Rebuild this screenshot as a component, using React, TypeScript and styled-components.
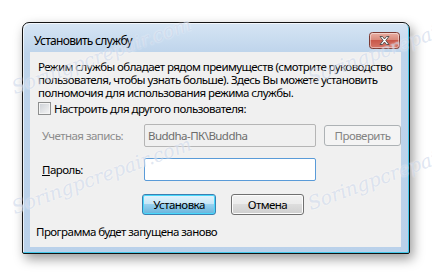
import React from "react";
import styled, { createGlobalStyle } from "styled-components";

const GlobalStyle = createGlobalStyle`
  html, body {
    margin: 0;
    padding: 0;
    background: #ffffff;
  }
  body {
    width: 432px;
    height: 277px;
    overflow: hidden;
    font-family: "Segoe UI", "Noto Sans", "Liberation Sans", sans-serif;
    font-size: 11.5px;
    letter-spacing: -0.55px;
    color: #000;
  }
`;

function App() {
  return (
    <Page>
      <GlobalStyle />
      <DialogWindow>
        <TitleBar>
          <TitleText>Установить службу</TitleText>
          <CloseButton>
            <CloseIcon />
          </CloseButton>
        </TitleBar>

        <ClientArea>
          <Intro>
            Режим службы обладает рядом преимуществ (смотрите руководство
            <br />
            пользователя, чтобы узнать больше). Здесь Вы можете установить
            <br />
            полномочия для использования режима службы.
          </Intro>

          <CheckRow>
            <CheckBox />
            <span>Настроить для другого пользователя:</span>
          </CheckRow>

          <FormGrid>
            <FieldLabel disabled>Учетная запись:</FieldLabel>
            <TextBox disabled>Buddha-ПК\Buddha</TextBox>
            <PushButton disabled>Проверить</PushButton>

            <FieldLabel>
              <u>П</u>ароль:
            </FieldLabel>
            <TextBox focused />
          </FormGrid>

          <ButtonRow>
            <PushButton primary w={74}>
              Установка
            </PushButton>
            <PushButton w={73}>Отмена</PushButton>
          </ButtonRow>

          <Footer>Программа будет запущена заново</Footer>
        </ClientArea>
      </DialogWindow>

      <Watermark style={{ left: 16, top: 76 }}>Soringpcrepair.com</Watermark>
      <Watermark style={{ left: 312, top: 66 }}>Soringpcrepair.com</Watermark>
      <Watermark style={{ left: 16, top: 196 }}>Soringpcrepair.com</Watermark>
      <Watermark style={{ left: 312, top: 192 }}>Soringpcrepair.com</Watermark>
    </Page>
  );
}

function CloseIcon() {
  return (
    <svg width="31" height="17" viewBox="0 0 31 17">
      <defs>
        <linearGradient id="closeBg" x1="0" y1="0" x2="0" y2="1">
          <stop offset="0" stopColor="#eab1a6" />
          <stop offset="0.45" stopColor="#d98b7d" />
          <stop offset="0.5" stopColor="#c9584a" />
          <stop offset="1" stopColor="#d5786a" />
        </linearGradient>
      </defs>
      <rect x="0.5" y="0.5" width="30" height="16" rx="3" fill="url(#closeBg)" stroke="#7b3a33" />
      <rect x="1.5" y="1.5" width="28" height="14" rx="2" fill="none" stroke="rgba(255,255,255,0.45)" />
      <path
        d="M11 4.5 L13.5 4.5 L15.5 7 L17.5 4.5 L20 4.5 L16.8 8.5 L20 12.5 L17.5 12.5 L15.5 10 L13.5 12.5 L11 12.5 L14.2 8.5 Z"
        fill="#ffffff"
        stroke="#4a4a4a"
        strokeWidth="0.9"
        strokeLinejoin="round"
      />
    </svg>
  );
}

const Page = styled.div`
  position: relative;
  width: 432px;
  height: 277px;
  box-sizing: border-box;
  padding: 22px 0 0 22px;
  overflow: hidden;
`;

const DialogWindow = styled.div`
  width: 388px;
  height: 232px;
  box-sizing: border-box;
  display: flex;
  flex-direction: column;
  padding: 0 8px 6px 7px;
  border: 1px solid #141414;
  border-radius: 7px 7px 2px 2px;
  background: linear-gradient(#d6e5f4, #bed4eb 30px, #bad1ea);
  box-shadow: inset -1px -1px 0 #43c8ea, inset 1px 1px 0 rgba(255, 255, 255, 0.7),
    3px 5px 12px rgba(0, 0, 0, 0.4);
`;

const TitleBar = styled.div`
  height: 29px;
  display: flex;
  align-items: flex-start;
  justify-content: space-between;
`;

const TitleText = styled.span`
  margin: 10px 0 0 4px;
  font-size: 12px;
  letter-spacing: -0.7px;
  line-height: 16px;
`;

const CloseButton = styled.div`
  margin: 9px 1px 0 0;
  width: 31px;
  height: 17px;
  display: flex;
`;

const ClientArea = styled.div`
  flex: 1;
  min-width: 0;
  background: #f0f0f0;
  padding: 8px 0 0 0;
  display: flex;
  flex-direction: column;
`;

const Intro = styled.div`
  margin-left: 8px;
  line-height: 13px;
  white-space: nowrap;
`;

const CheckRow = styled.div`
  margin: 3px 0 0 8px;
  height: 13px;
  display: flex;
  align-items: center;
  gap: 3px;
  line-height: 13px;
`;

const CheckBox = styled.span`
  width: 11px;
  height: 11px;
  border: 1px solid #8e8f8f;
  background: linear-gradient(135deg, #cbcfd5, #f6f6f6);
  box-shadow: inset 0 0 0 1px #f4f4f4;
`;

const FormGrid = styled.div`
  margin: 9px 0 0 12px;
  display: grid;
  grid-template-columns: 94px 172px 77px;
  column-gap: 8px;
  row-gap: 11px;
  align-items: center;
`;

const FieldLabel = styled.span<{ disabled?: boolean }>`
  color: ${(p) => (p.disabled ? "#8d8d8d" : "#000")};
  line-height: 14px;
`;

const TextBox = styled.div<{ disabled?: boolean; focused?: boolean }>`
  height: 23px;
  box-sizing: border-box;
  padding: 0 3px;
  display: flex;
  align-items: center;
  border: 1px solid ${(p) => (p.focused ? "#5a9bd8" : "#b5b5b5")};
  border-radius: 2px;
  background: ${(p) => (p.disabled ? "#f0f0f0" : "#ffffff")};
  color: #6d6d6d;
`;

const PushButton = styled.div<{ primary?: boolean; disabled?: boolean; w?: number }>`
  width: ${(p) => (p.w ? `${p.w}px` : "auto")};
  height: 21px;
  box-sizing: border-box;
  display: flex;
  align-items: center;
  justify-content: center;
  border-radius: 3px;
  border: 1px solid
    ${(p) => (p.primary ? "#3c7fb1" : p.disabled ? "#adb2b5" : "#707070")};
  color: ${(p) => (p.disabled ? "#838383" : "#000")};
  background: ${(p) =>
    p.primary
      ? "linear-gradient(#e5f4fc, #c4e5f6 50%, #98d1ef 50%, #68b3db)"
      : p.disabled
      ? "#f4f4f4"
      : "linear-gradient(#f2f2f2, #ebebeb 50%, #dddddd 50%, #cfcfcf)"};
  box-shadow: ${(p) =>
    p.primary
      ? "inset 0 0 0 1px #48d8fb"
      : p.disabled
      ? "none"
      : "inset 0 0 0 1px #fcfcfc"};
`;

const ButtonRow = styled.div`
  margin: 13px 0 0 112px;
  display: flex;
  gap: 15px;
`;

const Footer = styled.div`
  margin: 10px 0 0 6px;
  line-height: 14px;
`;

const Watermark = styled.span`
  position: absolute;
  font-family: "DejaVu Serif", "Liberation Serif", serif;
  font-style: italic;
  font-size: 19px;
  letter-spacing: 0;
  white-space: nowrap;
  color: rgba(175, 192, 222, 0.4);
  text-shadow: 0 0 2px rgba(255, 255, 255, 0.8);
  transform: rotate(-20deg);
  transform-origin: left bottom;
  pointer-events: none;
`;

export default App;
